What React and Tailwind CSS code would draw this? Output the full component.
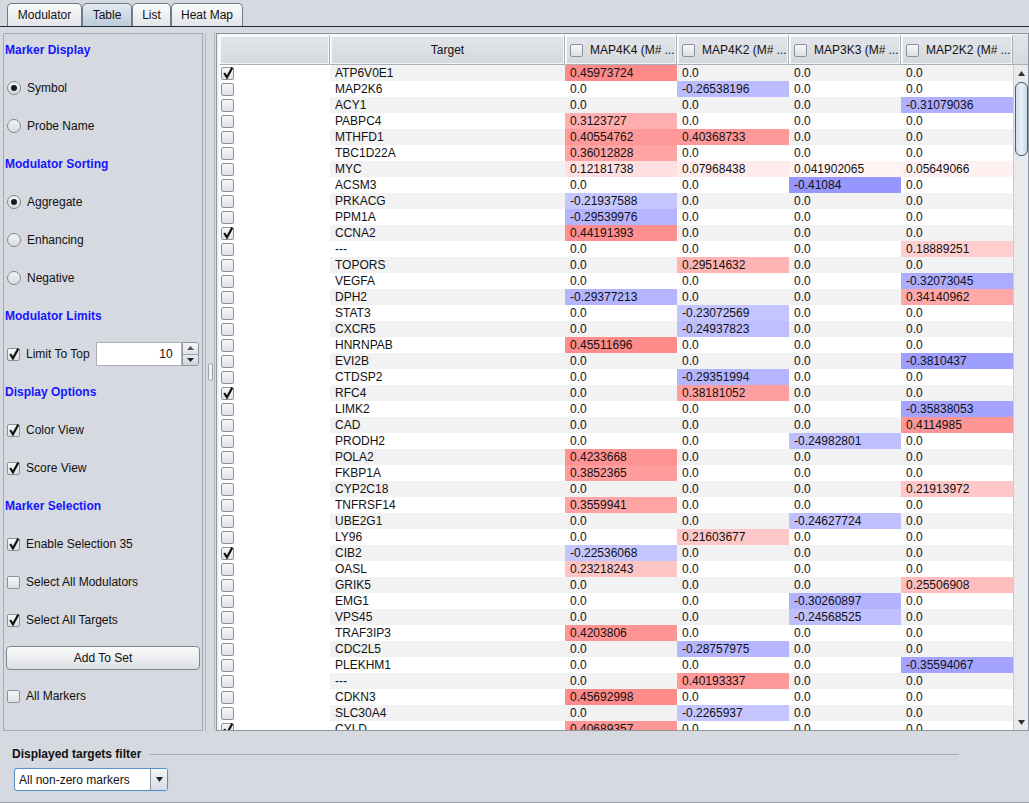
import React from "react";

const rows = [
  ["ATP6V0E1", true, [0.45973724, 0, 0, 0]],
  ["MAP2K6", false, [0, -0.26538196, 0, 0]],
  ["ACY1", false, [0, 0, 0, -0.31079036]],
  ["PABPC4", false, [0.3123727, 0, 0, 0]],
  ["MTHFD1", false, [0.40554762, 0.40368733, 0, 0]],
  ["TBC1D22A", false, [0.36012828, 0, 0, 0]],
  ["MYC", false, [0.12181738, 0.07968438, 0.041902065, 0.05649066]],
  ["ACSM3", false, [0, 0, -0.41084, 0]],
  ["PRKACG", false, [-0.21937588, 0, 0, 0]],
  ["PPM1A", false, [-0.29539976, 0, 0, 0]],
  ["CCNA2", true, [0.44191393, 0, 0, 0]],
  ["---", false, [0, 0, 0, 0.18889251]],
  ["TOPORS", false, [0, 0.29514632, 0, 0]],
  ["VEGFA", false, [0, 0, 0, -0.32073045]],
  ["DPH2", false, [-0.29377213, 0, 0, 0.34140962]],
  ["STAT3", false, [0, -0.23072569, 0, 0]],
  ["CXCR5", false, [0, -0.24937823, 0, 0]],
  ["HNRNPAB", false, [0.45511696, 0, 0, 0]],
  ["EVI2B", false, [0, 0, 0, -0.3810437]],
  ["CTDSP2", false, [0, -0.29351994, 0, 0]],
  ["RFC4", true, [0, 0.38181052, 0, 0]],
  ["LIMK2", false, [0, 0, 0, -0.35838053]],
  ["CAD", false, [0, 0, 0, 0.4114985]],
  ["PRODH2", false, [0, 0, -0.24982801, 0]],
  ["POLA2", false, [0.4233668, 0, 0, 0]],
  ["FKBP1A", false, [0.3852365, 0, 0, 0]],
  ["CYP2C18", false, [0, 0, 0, 0.21913972]],
  ["TNFRSF14", false, [0.3559941, 0, 0, 0]],
  ["UBE2G1", false, [0, 0, -0.24627724, 0]],
  ["LY96", false, [0, 0.21603677, 0, 0]],
  ["CIB2", true, [-0.22536068, 0, 0, 0]],
  ["OASL", false, [0.23218243, 0, 0, 0]],
  ["GRIK5", false, [0, 0, 0, 0.25506908]],
  ["EMG1", false, [0, 0, -0.30260897, 0]],
  ["VPS45", false, [0, 0, -0.24568525, 0]],
  ["TRAF3IP3", false, [0.4203806, 0, 0, 0]],
  ["CDC2L5", false, [0, -0.28757975, 0, 0]],
  ["PLEKHM1", false, [0, 0, 0, -0.35594067]],
  ["---", false, [0, 0.40193337, 0, 0]],
  ["CDKN3", false, [0.45692998, 0, 0, 0]],
  ["SLC30A4", false, [0, -0.2265937, 0, 0]],
  ["CYLD", true, [0.40689357, 0, 0, 0]],
];

const columns = ["MAP4K4 (M# ...", "MAP4K2 (M# ...", "MAP3K3 (M# ...", "MAP2K2 (M# ..."];

// value -> cell colour, red for positive, blue for negative
const cellColor = (v, stripe) => {
  if (v === 0) return stripe ? "#f2f2f2" : "#ffffff";
  const c = Math.round(255 * (1 - Math.abs(v)));
  return v > 0 ? `rgb(255,${c},${c})` : `rgb(${c},${c},255)`;
};

const fmt = (v) => (v === 0 ? "0.0" : String(v));

const CheckBox = ({ checked }) => (
  <span className="relative inline-block w-[13px] h-[13px] shrink-0 rounded-[2px] border border-[#8a939c] bg-gradient-to-b from-[#f7f7f7] to-[#dde0e4]">
    {checked && (
      <svg viewBox="0 0 13 13" className="absolute -left-[1px] -top-[2px] w-[14px] h-[14px]">
        <path d="M3 6.5 L5.5 10.5 L10.5 1.5" fill="none" stroke="#111" strokeWidth="2" />
      </svg>
    )}
  </span>
);

const Radio = ({ checked }) => (
  <span className="flex items-center justify-center w-[14px] h-[14px] shrink-0 rounded-full border border-[#7f868e] bg-gradient-to-b from-[#f4f4f4] to-[#d8dbe0]">
    {checked && <span className="w-[6px] h-[6px] rounded-full bg-[#1b1b1b]" />}
  </span>
);

const Heading = ({ children }) => (
  <div className="h-[38px] flex items-center pl-[1px] font-bold text-[#1515ff]">{children}</div>
);

const Item = ({ children }) => (
  <div className="h-[38px] flex items-center pl-[3px] gap-[6px] text-[#111] whitespace-nowrap">{children}</div>
);

const Tab = ({ label, active, w }) => (
  <div
    className={`h-[23px] ${w} flex items-center justify-center rounded-t-[5px] border border-b-0 border-[#6f7a86] text-[#111] ${
      active ? "bg-gradient-to-b from-[#e3ebf3] to-[#bccbd9]" : "bg-gradient-to-b from-[#fbfbfb] to-[#e2e4e8]"
    }`}
  >
    {label}
  </div>
);

const LeftPanel = () => (
  <div className="ml-[3px] w-[200px] shrink-0 h-full border border-[#a6abb2] flex flex-col">
    <div className="-mt-[3px]">
      <Heading>Marker Display</Heading>
      <Item><Radio checked />Symbol</Item>
      <Item><Radio />Probe Name</Item>
      <Heading>Modulator Sorting</Heading>
      <Item><Radio checked />Aggregate</Item>
      <Item><Radio />Enhancing</Item>
      <Item><Radio />Negative</Item>
      <Heading>Modulator Limits</Heading>
      <Item>
        <CheckBox checked />
        <span>Limit To Top</span>
        <div className="flex h-[24px] shrink-0">
          <div className="w-[86px] h-full bg-white border border-[#abb0b7] flex items-center justify-end pr-[8px]">10</div>
          <div className="w-[17px] h-full flex flex-col border border-[#8c96a0] rounded-r-[3px] overflow-hidden">
            <div className="flex-1 flex items-center justify-center bg-gradient-to-b from-[#f6f6f6] to-[#dfe2e6] border-b border-[#9aa3ac]">
              <svg width="7" height="4" viewBox="0 0 7 4"><path d="M0 4 L3.5 0 L7 4Z" fill="#555" /></svg>
            </div>
            <div className="flex-1 flex items-center justify-center bg-gradient-to-b from-[#e8ebee] to-[#cfd5dc]">
              <svg width="7" height="4" viewBox="0 0 7 4"><path d="M0 0 L3.5 4 L7 0Z" fill="#222" /></svg>
            </div>
          </div>
        </div>
      </Item>
      <Heading>Display Options</Heading>
      <Item><CheckBox checked />Color View</Item>
      <Item><CheckBox checked />Score View</Item>
      <Heading>Marker Selection</Heading>
      <Item><CheckBox checked />Enable Selection 35</Item>
      <Item><CheckBox />Select All Modulators</Item>
      <Item><CheckBox checked />Select All Targets</Item>
      <div className="h-[38px] flex items-center px-[2px]">
        <div className="w-full h-[24px] rounded-[4px] border border-[#7e8790] bg-gradient-to-b from-[#fafafa] via-[#eceef0] to-[#dcdfe3] flex items-center justify-center text-[#111]">
          Add To Set
        </div>
      </div>
      <Item><CheckBox />All Markers</Item>
    </div>
  </div>
);

const Splitter = () => (
  <div className="w-[13px] shrink-0 h-full flex">
    <div className="w-[2px] ml-[1px] border-r border-[#b3b8bf]" />
    <div className="flex-1 flex items-center justify-center">
      <div className="w-[5px] h-[18px] rounded-[3px] border border-[#9aa1a9] bg-[#eef0f2] mb-[20px]" />
    </div>
    <div className="w-[2px] border-l border-[#b3b8bf]" />
  </div>
);

const HeaderCell = ({ w, children, center }) => (
  <div
    className={`${w} shrink-0 h-full flex items-center border border-[#a9afb6] border-t-white border-l-white shadow-[inset_0_0_0_1px_#f4f5f7] bg-gradient-to-b from-[#e2e5ea] to-[#d5d9df] text-[#111] ${
      center ? "justify-center" : "pl-[4px] gap-[7px]"
    }`}
  >
    {children}
  </div>
);

const Scrollbar = () => (
  <div className="w-[15px] shrink-0 h-full flex flex-col bg-[#e9eaec] border-l border-[#c9ccd0]">
    <div className="h-[16px] flex items-center justify-center">
      <svg width="7" height="5" viewBox="0 0 7 5"><path d="M0 5 L3.5 0 L7 5Z" fill="#333" /></svg>
    </div>
    <div className="flex-1 relative">
      <div className="absolute left-[1px] top-[1px] w-[13px] h-[74px] rounded-[6px] border border-[#4f5b66] bg-gradient-to-r from-[#cfe0ee] via-[#e6f0f8] to-[#c2d6e6]" />
    </div>
    <div className="h-[16px] flex items-center justify-center">
      <svg width="7" height="5" viewBox="0 0 7 5"><path d="M0 0 L3.5 5 L7 0Z" fill="#333" /></svg>
    </div>
  </div>
);

const TablePanel = () => (
  <div className="w-[813px] shrink-0 h-full border border-[#8f969e] pl-[2px] pt-[1px] bg-[#eef0f2] flex flex-col">
    <div className="h-[30px] flex shrink-0 bg-gradient-to-b from-[#e2e5ea] to-[#d5d9df]">
      <HeaderCell w="w-[111px]" center />
      <HeaderCell w="w-[235px]" center>Target</HeaderCell>
      {columns.map((c) => (
        <HeaderCell key={c} w="w-[112px]">
          <CheckBox />
          <span className="whitespace-nowrap">{c}</span>
        </HeaderCell>
      ))}
      <div className="flex-1 border-b border-[#a9afb6]" />
    </div>
    <div className="flex-1 flex min-h-0">
      <div className="w-[794px] shrink-0 h-full overflow-hidden bg-white">
        {rows.map(([name, checked, vals], i) => {
          const stripe = i % 2 === 0;
          return (
            <div key={i} className="h-[16px] flex text-[#111] leading-[16px]">
              <div className="w-[111px] shrink-0 bg-white flex items-center pl-[2px]">
                <CheckBox checked={checked} />
              </div>
              <div className={`w-[235px] shrink-0 pl-[5px] ${stripe ? "bg-[#f2f2f2]" : "bg-white"}`}>{name}</div>
              {vals.map((v, j) => (
                <div key={j} className="w-[112px] shrink-0 pl-[5px] whitespace-nowrap" style={{ backgroundColor: cellColor(v, stripe) }}>
                  {fmt(v)}
                </div>
              ))}
            </div>
          );
        })}
      </div>
      <Scrollbar />
    </div>
  </div>
);

export default function App() {
  return (
    <div className="w-[1029px] h-[803px] bg-[#d6d9e0] flex flex-col overflow-hidden font-['Liberation_Sans',Arial,sans-serif] text-[12px]">
      <div className="h-[27px] shrink-0 flex items-end pl-[7px] border-b border-[#1f2b38]">
        <Tab label="Modulator" w="w-[75px]" />
        <Tab label="Table" w="w-[50px]" active />
        <Tab label="List" w="w-[39px]" />
        <Tab label="Heat Map" w="w-[72px]" />
      </div>
      <div className="h-[704px] shrink-0 pt-[6px] flex">
        <LeftPanel />
        <Splitter />
        <TablePanel />
      </div>
      <div className="flex-1 flex flex-col border-b border-[#9aa0a8] pl-[12px] pt-[14px]">
        <div className="flex items-center gap-[8px] pr-[70px]">
          <span className="font-bold text-[#111]">Displayed targets filter</span>
          <div className="flex-1 h-[1px] bg-[#a8adb4]" />
        </div>
        <div className="mt-[5px] ml-[2px] w-[154px] h-[23px] flex rounded-[3px] border border-[#5a8fc8] bg-white shadow-[0_0_1px_#8fb7e0] overflow-hidden">
          <div className="flex-1 flex items-center pl-[4px] text-[#111]">All non-zero markers</div>
          <div className="w-[17px] border-l border-[#8c96a0] bg-gradient-to-b from-[#f4f6f8] to-[#d6dde5] flex items-center justify-center">
            <svg width="7" height="5" viewBox="0 0 7 5"><path d="M0 0 L3.5 5 L7 0Z" fill="#222" /></svg>
          </div>
        </div>
      </div>
    </div>
  );
}
